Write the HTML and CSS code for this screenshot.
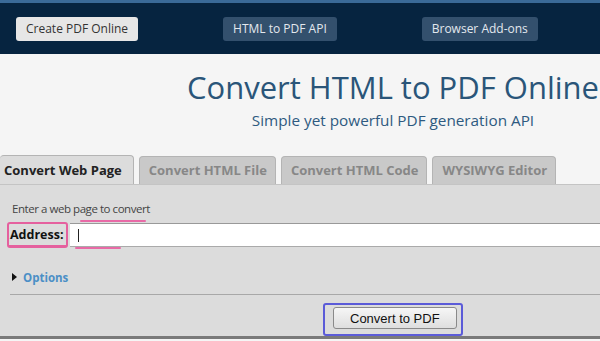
FILE: index.html
```html
<!DOCTYPE html>
<html lang="en">
<head>
    <meta charset="UTF-8">
    <title>Convert HTML to PDF Online</title>
    <link rel="stylesheet" href="styles.css">
</head>
<body>
<div class="topbar">
    <a href="#" class="navbtn current">Create PDF Online</a>
    <a href="#" class="navbtn">HTML to PDF API</a>
    <a href="#" class="navbtn">Browser Add-ons</a>
</div>

<div class="hero">
    <h1 class="title">Convert HTML to PDF Online</h1>
    <p class="sub">Simple yet powerful PDF generation API</p>
</div>

<div class="tabs">
    <span class="tab active">Convert Web Page</span>
    <span class="tab">Convert HTML File</span>
    <span class="tab">Convert HTML Code</span>
    <span class="tab">WYSIWYG Editor</span>
</div>

<div class="panel">
    <p class="hint">Enter a web page to convert</p>
    <div class="addr">
        <label for="url" class="mark">Address:</label>
        <div class="field">
            <input type="text" id="url" class="urlbox">
            <span class="caret"></span>
            <span class="scrib s1"></span>
            <span class="scrib s2"></span>
        </div>
    </div>
    <div class="opts"><span class="arrow"></span><a href="#">Options</a></div>
    <div class="actions">
        <span class="ring"><button type="button">Convert to PDF</button></span>
    </div>
</div>
</body>
</html>
```

FILE: styles.css
```css
body {
    margin: 0;
    background: #f5f5f5;
    font-family: "Open Sans", "DejaVu Sans", sans-serif;
    overflow: hidden;
}
.topbar {
    height: 51px;
    border-top: 3px solid #3a6a98;
    background: #062440;
    display: flex;
    align-items: center;
    gap: 85px;
    padding-left: 16px;
}
.navbtn {
    display: block;
    height: 24px;
    line-height: 24px;
    padding: 0 10px;
    border-radius: 3px;
    background: #33506d;
    color: #e3e8ee;
    font-size: 12px;
    text-decoration: none;
}
.navbtn.current {
    background: #e6e6e6;
    color: #333;
}

.hero {
    margin-left: 186px;
    width: 414px;
    text-align: center;
    height: 102px;
}
.title {
    margin: 0;
    padding-top: 13px;
    font-size: 31px;
    font-weight: normal;
    color: #2a5579;
    white-space: nowrap;
    line-height: 40px;
}
.sub {
    margin: 3px 0 0;
    font-size: 15.3px;
    color: #2e5a80;
}

.tabs {
    display: flex;
    gap: 5px;
    height: 28px;
    align-items: flex-end;
}
.tab {
    display: block;
    height: 27px;
    line-height: 26px;
    padding: 0 8px 0 9px;
    background: #c9c9c9;
    border: 1px solid #b4b4b4;
    border-bottom: none;
    border-radius: 4px 4px 0 0;
    font-size: 13px;
    font-weight: bold;
    color: #878787;
}
.tab.active {
    height: 28px;
    line-height: 28px;
    background: #dcdcdc;
    color: #222;
    border-left: none;
    padding-left: 4px;
    padding-right: 11px;
}

.panel {
    background: #dcdcdc;
    border-top: 1px solid #c4c4c4;
    border-bottom: 3px solid #7a7a7a;
    height: 151px;
    padding: 0 0 0 10px;
}
.hint {
    margin: 0;
    padding: 16px 0 0 2px;
    font-size: 11.5px;
    letter-spacing: -0.45px;
    color: #444;
    line-height: 16px;
}
.addr {
    display: flex;
    align-items: center;
    margin-top: 5px;
}
.mark {
    font-size: 12.5px;
    font-weight: bold;
    color: #111;
    padding: 2px 2px 2px 1px;
    border: 2px solid #e5609e;
    border-radius: 3px;
    border-bottom-width: 3px;
    margin-left: -3px;
    margin-right: 2px;
}
.field {
    position: relative;
    flex: 1;
}
.urlbox {
    display: block;
    width: 100%;
    height: 24px;
    box-sizing: border-box;
    border: none;
    border-top: 1px solid #999;
    border-bottom: 1px solid #aaa;
    background: #fff;
}
.caret {
    position: absolute;
    left: 8px;
    top: 6px;
    width: 1px;
    height: 13px;
    background: #222;
}
.scrib {
    position: absolute;
    height: 2px;
    background: #e86aa6;
    border-radius: 1px;
}
.s1 { left: 10px; top: -3px; width: 66px; }
.s2 { left: 5px; top: 24px; width: 46px; }

.opts {
    margin-top: 21px;
    display: flex;
    align-items: center;
    gap: 6px;
    padding-left: 2px;
    height: 16px;
}
.arrow {
    width: 0;
    height: 0;
    border-left: 5px solid #111;
    border-top: 4px solid transparent;
    border-bottom: 4px solid transparent;
}
.opts a {
    font-size: 11.5px;
    font-weight: bold;
    color: #4b8fc6;
    text-decoration: none;
}
.actions {
    margin-top: 9px;
    border-top: 1px solid #a8a8a8;
    padding-top: 8px;
    padding-left: 313px;
}
.ring {
    display: inline-block;
    padding: 2px 4px 5px 8px;
    border: 2px solid #5b5bd8;
    border-radius: 3px;
}
.ring button {
    display: block;
    height: 22px;
    padding: 0 16px;
    font-family: "Liberation Sans", Arial, sans-serif;
    font-size: 13px;
    color: #111;
    background: linear-gradient(#f6f6f6, #dedede);
    border: 1px solid #8a8a8a;
    border-radius: 3px;
}
```
